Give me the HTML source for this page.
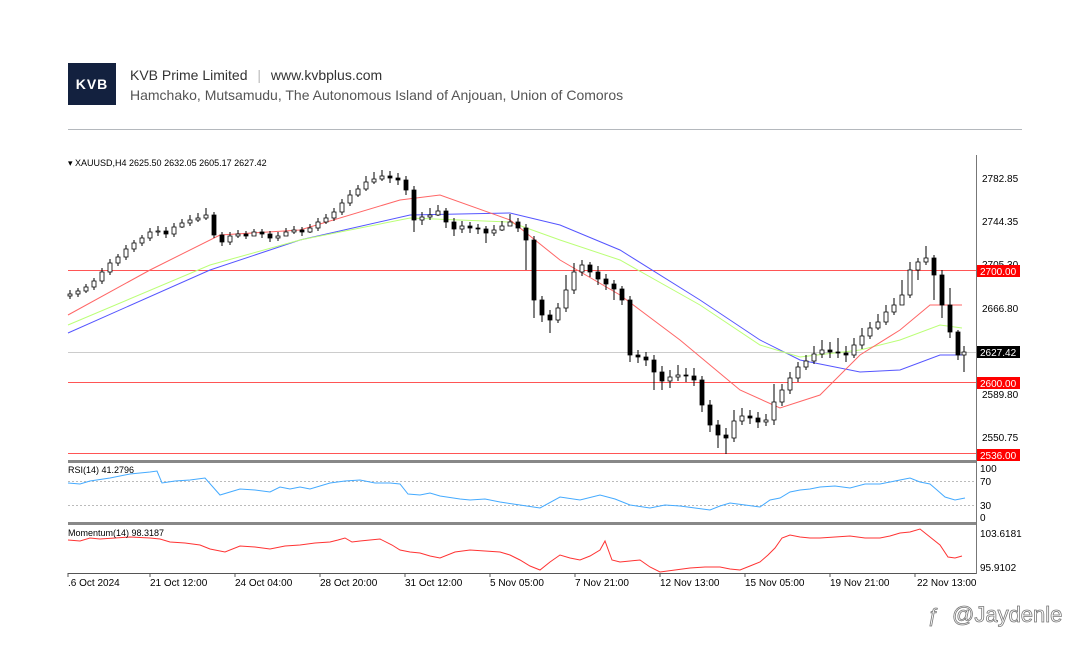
<!DOCTYPE html>
<html><head><meta charset="utf-8"><style>
body{margin:0;width:1084px;height:656px;background:#fff;overflow:hidden;font-family:"Liberation Sans",sans-serif;position:relative}
.logo{position:absolute;left:68px;top:63px;width:48px;height:42px;background:#13213f;color:#fff;font-weight:bold;font-size:14px;text-align:center;line-height:42px;letter-spacing:1px}
.t1{position:absolute;left:130px;top:67px;font-size:14px;color:#333}
.t2{position:absolute;left:130px;top:87px;font-size:14px;color:#555}
.hr{position:absolute;left:68px;top:129px;width:954px;height:1px;background:#b4b8bd}
svg{position:absolute;left:0;top:0}
</style></head><body>
<div class="logo">KVB</div>
<div class="t1">KVB Prime Limited <span style="color:#bbb;margin:0 6px">|</span> www.kvbplus.com</div>
<div class="t2">Hamchako, Mutsamudu, The Autonomous Island of Anjouan, Union of Comoros</div>
<div class="hr"></div>
<svg width="1084" height="656" font-family="Liberation Sans, sans-serif" font-size="10">
<line x1="976.5" y1="155" x2="976.5" y2="574" stroke="#777"/>
<line x1="68" y1="573.5" x2="976" y2="573.5" stroke="#555"/>
<rect x="68" y="460" width="908" height="3" fill="#888"/>
<rect x="68" y="522" width="908" height="3" fill="#888"/>
<path d="M68 270.5H976M68 382.5H976M68 453.5H976" stroke="#f55"/>
<path d="M68 352.5H976" stroke="#ccc"/>
<path d="M68 481.5H976M68 505.5H976" stroke="#bbb" stroke-dasharray="2,2"/>
<path d="M68 573V577M150 573V577M235 573V577M320 573V577M405 573V577M490 573V577M575 573V577M660 573V577M745 573V577M830 573V577M915 573V577" stroke="#555"/>
<polyline fill="none" stroke="#55f" points="68,333 210,270 300,240 410,215 510,213 560,225 620,250 700,300 760,340 800,360 860,372 900,370 940,355 962,355"/>
<polyline fill="none" stroke="#bf7" points="68,325 210,265 300,240 410,218 510,222 560,240 620,260 700,305 760,345 800,357 860,350 900,340 940,325 962,328"/>
<polyline fill="none" stroke="#f66" points="68,315 150,270 220,235 300,230 400,200 440,195 510,220 560,260 620,295 680,340 740,390 780,408 820,395 860,355 900,330 930,305 962,305"/>
<path stroke="#000" fill="none" d="M70 290V299M78 288V297M86 284V293M94 278V290M102 268V284M110 259V275M118 254V266M126 245V260M134 240V252M142 235V246M150 228V241M158 226V236M166 227V238M174 223V237M182 219V228M190 215V226M198 213V222M206 208V220M214 212V238M222 232V246M230 232V245M238 230V238M246 231V239M254 229V236M262 229V238M270 231V242M278 232V241M286 228V236M294 226V234M302 227V236M310 224V233M318 218V231M326 214V224M334 208V221M342 199V215M350 190V206M358 185V197M366 176V191M374 172V184M382 170V181M390 171V183M398 173V185M406 176V195M414 186V232M422 212V225M430 208V220M438 205V216M446 208V228M454 218V236M462 221V233M470 222V233M478 224V234M486 226V243M494 225V236M502 221V231M510 214V226M518 218V232M526 224V270M534 236V318M542 296V322M550 310V333M558 303V323M566 275V312M574 263V294M582 260V276M590 262V277M598 266V285M606 274V290M614 280V300M622 286V305M630 296V362M638 350V363M646 352V366M654 355V390M662 366V390M670 370V388M678 365V381M686 368V382M694 368V386M702 376V412M710 400V432M718 420V448M726 428V454M734 410V442M742 408V425M750 410V424M758 412V428M766 414V426M774 384V425M782 384V406M790 372V394M798 362V382M806 355V370M814 346V364M822 340V358M830 342V358M838 338V358M846 346V362M854 338V358M862 328V349M870 322V339M878 314V330M886 305V325M894 298V315M902 280V305M910 262V298M918 258V280M926 246V265M934 255V300M942 270V318M950 288V338M958 330V360M964 346V372"/>
<path stroke="#000" stroke-width="0.8" fill="#fff" d="M68 294h4v2h-4zM76 291h4v3h-4zM84 287h4v4h-4zM92 281h4v6h-4zM100 272h4v9h-4zM108 263h4v9h-4zM116 257h4v6h-4zM124 249h4v8h-4zM132 243h4v6h-4zM140 238h4v5h-4zM148 232h4v6h-4zM156 231h4v1h-4zM172 227h4v7h-4zM180 223h4v4h-4zM188 220h4v3h-4zM196 218h4v2h-4zM204 215h4v3h-4zM228 236h4v6h-4zM236 234h4v2h-4zM252 232h4v4h-4zM276 236h4v2h-4zM284 232h4v4h-4zM292 230h4v2h-4zM308 228h4v4h-4zM316 222h4v6h-4zM324 218h4v4h-4zM332 212h4v6h-4zM340 203h4v9h-4zM348 195h4v8h-4zM356 189h4v6h-4zM364 182h4v7h-4zM372 179h4v3h-4zM380 176h4v3h-4zM420 217h4v3h-4zM428 215h4v2h-4zM436 211h4v4h-4zM460 226h4v3h-4zM492 230h4v3h-4zM500 226h4v4h-4zM508 222h4v4h-4zM556 308h4v12h-4zM564 290h4v18h-4zM572 272h4v18h-4zM580 265h4v7h-4zM668 377h4v4h-4zM676 375h4v2h-4zM732 421h4v17h-4zM740 416h4v5h-4zM764 420h4v2h-4zM772 402h4v18h-4zM780 390h4v12h-4zM788 378h4v12h-4zM796 367h4v11h-4zM804 361h4v6h-4zM812 354h4v7h-4zM820 350h4v4h-4zM852 345h4v10h-4zM860 336h4v9h-4zM868 328h4v8h-4zM876 322h4v6h-4zM884 312h4v10h-4zM892 305h4v7h-4zM900 295h4v10h-4zM908 270h4v25h-4zM916 262h4v8h-4zM924 258h4v4h-4zM962 352h4v3h-4z"/>
<path stroke="#000" stroke-width="0.8" fill="#000" d="M164 231h4v3h-4zM212 215h4v20h-4zM220 235h4v7h-4zM244 234h4v2h-4zM260 232h4v2h-4zM268 234h4v4h-4zM300 230h4v2h-4zM388 176h4v2h-4zM396 178h4v2h-4zM404 180h4v10h-4zM412 190h4v30h-4zM444 211h4v11h-4zM452 222h4v7h-4zM468 226h4v2h-4zM476 228h4v1h-4zM484 229h4v4h-4zM516 222h4v6h-4zM524 228h4v12h-4zM532 240h4v60h-4zM540 300h4v15h-4zM548 315h4v5h-4zM588 265h4v7h-4zM596 272h4v7h-4zM604 279h4v5h-4zM612 284h4v5h-4zM620 289h4v11h-4zM628 300h4v55h-4zM636 355h4v2h-4zM644 357h4v3h-4zM652 360h4v12h-4zM660 372h4v9h-4zM684 375h4v1h-4zM692 376h4v4h-4zM700 380h4v25h-4zM708 405h4v20h-4zM716 425h4v10h-4zM724 435h4v3h-4zM748 416h4v2h-4zM756 418h4v4h-4zM828 350h4v2h-4zM836 352h4v1h-4zM844 353h4v2h-4zM932 258h4v17h-4zM940 275h4v30h-4zM948 305h4v27h-4zM956 332h4v23h-4z"/>
<polyline fill="none" stroke="#4af" points="68,483 80,484 90,481 110,478 130,474 150,472 157,471 162,483 175,481 190,480 205,478 220,495 240,489 255,490 270,492 280,487 290,489 300,487 310,489 330,483 345,481 360,480 375,483 390,483 400,484 408,494 420,495 430,493 440,496 460,499 470,500 485,499 500,502 520,505 540,508 560,497 580,500 600,495 615,499 630,505 650,508 665,505 680,506 695,508 710,510 720,506 730,503 745,505 760,507 770,500 780,498 790,492 800,490 810,489 820,487 835,486 850,488 865,484 880,484 895,481 910,478 920,482 930,484 937,490 945,497 955,500 965,498"/>
<polyline fill="none" stroke="#f33" points="68,540 80,541 90,538 100,539 115,538 130,537 150,538 160,539 170,542 185,543 200,545 210,549 225,552 240,546 255,547 270,549 285,546 300,545 315,543 330,542 338,540 345,538 352,542 360,541 370,540 380,539 392,545 400,550 410,552 420,553 430,556 440,558 455,552 470,550 485,551 500,552 510,555 520,560 530,566 540,570 550,562 560,555 570,558 580,560 590,556 600,550 605,541 612,560 620,562 630,561 640,560 650,567 660,572 675,570 690,568 705,567 720,567 730,569 740,570 750,566 760,562 768,555 775,548 782,538 790,535 800,537 810,538 820,538 835,537 850,536 865,538 880,538 890,536 900,533 910,532 920,529 930,537 940,545 948,557 955,558 962,556"/>
<text x="68" y="166" font-size="9" fill="#000">▾ XAUUSD,H4  2625.50 2632.05 2605.17 2627.42</text>
<text x="68" y="473" font-size="9">RSI(14) 41.2796</text>
<text x="68" y="536" font-size="9">Momentum(14) 98.3187</text>
<g font-size="10" fill="#000">
<text x="982" y="182">2782.85</text><text x="982" y="225">2744.35</text><text x="982" y="268">2705.30</text>
<text x="982" y="312">2666.80</text><text x="982" y="398">2589.80</text><text x="982" y="441">2550.75</text>
<text x="980" y="472">100</text><text x="980" y="485">70</text><text x="980" y="509">30</text><text x="980" y="521">0</text>
<text x="980" y="537">103.6181</text><text x="980" y="571">95.9102</text>
</g>
<rect x="977" y="265" width="43" height="12" fill="#f00"/><text x="980" y="275" fill="#fff">2700.00</text>
<rect x="977" y="346" width="43" height="12" fill="#000"/><text x="980" y="356" fill="#fff">2627.42</text>
<rect x="977" y="377" width="43" height="12" fill="#f00"/><text x="980" y="387" fill="#fff">2600.00</text>
<rect x="977" y="449" width="43" height="12" fill="#f00"/><text x="980" y="459" fill="#fff">2536.00</text>
<g font-size="10">
<text x="68" y="586">.6 Oct 2024</text><text x="150" y="586">21 Oct 12:00</text><text x="235" y="586">24 Oct 04:00</text>
<text x="320" y="586">28 Oct 20:00</text><text x="405" y="586">31 Oct 12:00</text><text x="490" y="586">5 Nov 05:00</text>
<text x="575" y="586">7 Nov 21:00</text><text x="660" y="586">12 Nov 13:00</text><text x="745" y="586">15 Nov 05:00</text>
<text x="830" y="586">19 Nov 21:00</text><text x="917" y="586">22 Nov 13:00</text>
</g>
<text x="952" y="622" font-size="22" fill="#fff" stroke="#777" stroke-width="0.8">@Jaydenle</text>
<text x="928" y="622" font-size="20" fill="#fff" stroke="#777" stroke-width="0.8">ƒ</text>
</svg>
</body></html>
